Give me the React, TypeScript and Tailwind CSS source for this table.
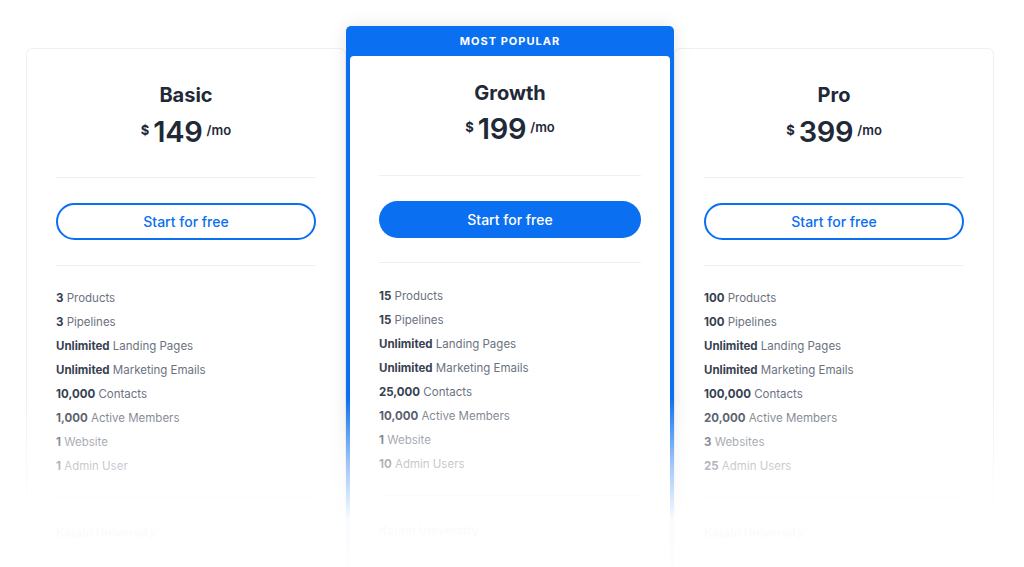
import React from 'react';

type Feature = { strong: string; rest: string };

interface Plan {
  name: string;
  price: string;
  popular?: boolean;
  features: Feature[];
}

const plans: Plan[] = [
  {
    name: 'Basic',
    price: '149',
    features: [
      { strong: '3', rest: 'Products' },
      { strong: '3', rest: 'Pipelines' },
      { strong: 'Unlimited', rest: 'Landing Pages' },
      { strong: 'Unlimited', rest: 'Marketing Emails' },
      { strong: '10,000', rest: 'Contacts' },
      { strong: '1,000', rest: 'Active Members' },
      { strong: '1', rest: 'Website' },
      { strong: '1', rest: 'Admin User' },
    ],
  },
  {
    name: 'Growth',
    price: '199',
    popular: true,
    features: [
      { strong: '15', rest: 'Products' },
      { strong: '15', rest: 'Pipelines' },
      { strong: 'Unlimited', rest: 'Landing Pages' },
      { strong: 'Unlimited', rest: 'Marketing Emails' },
      { strong: '25,000', rest: 'Contacts' },
      { strong: '10,000', rest: 'Active Members' },
      { strong: '1', rest: 'Website' },
      { strong: '10', rest: 'Admin Users' },
    ],
  },
  {
    name: 'Pro',
    price: '399',
    features: [
      { strong: '100', rest: 'Products' },
      { strong: '100', rest: 'Pipelines' },
      { strong: 'Unlimited', rest: 'Landing Pages' },
      { strong: 'Unlimited', rest: 'Marketing Emails' },
      { strong: '100,000', rest: 'Contacts' },
      { strong: '20,000', rest: 'Active Members' },
      { strong: '3', rest: 'Websites' },
      { strong: '25', rest: 'Admin Users' },
    ],
  },
];

function PlanBody({ plan }: { plan: Plan }) {
  const popular = !!plan.popular;
  return (
    <div className={`px-[29px] pb-[40px] ${popular ? 'pt-[23px]' : 'pt-[32px]'}`}>
      {/* Nombre y precio */}
      <h3 className="h-[28px] text-center text-[20px] font-bold leading-[28px] text-[#1f2937]">{plan.name}</h3>
      <div className={`flex h-[36px] items-center justify-center gap-[4px] text-[#1f2937] ${popular ? 'mt-[3px]' : 'mt-[4px]'}`}>
        <span className="text-[13px] font-bold">$</span>
        <span className="text-[29px] font-semibold leading-none tracking-[-0.3px]">{plan.price}</span>
        <span className="text-[13px] font-semibold">/mo</span>
      </div>

      <div className={`h-px bg-[#eef0f2] ${popular ? 'mt-[29px]' : 'mt-[28px]'}`} />

      <button
        className={`mt-[25px] flex h-[37px] w-full items-center justify-center rounded-full text-[14px] font-medium ${
          popular ? 'bg-[#0a6ff0] text-white' : 'border-2 border-[#0a6ff0] text-[#0a6ff0]'
        }`}
      >
        Start for free
      </button>

      <div className={`h-px bg-[#eef0f2] ${popular ? 'mt-[24px]' : 'mt-[25px]'}`} />

      {/* Características */}
      <ul className={popular ? 'mt-[21px]' : 'mt-[20px]'}>
        {plan.features.map((f, i) => (
          <li key={i} className="h-[24px] text-[11.5px] leading-[24px] text-[#6b7280]">
            <span className="font-bold text-[#374151]">{f.strong}</span> {f.rest}
          </li>
        ))}
      </ul>

      <div className="mt-[19px] h-px bg-[#eef0f2]" />
      <p className="mt-[26px] text-[12px] font-bold text-[#374151]">Kajabi University</p>
    </div>
  );
}

export default function App() {
  return (
    <div className="relative h-[567px] w-[1024px] overflow-hidden bg-white font-['Inter','Liberation_Sans',sans-serif]">
      <div className="flex items-start pl-[26px] pt-[26px]">
        <div className="mt-[22px] w-[320px] rounded-[6px] border border-[#eef0f3] bg-white">
          <PlanBody plan={plans[0]} />
        </div>

        <div className="relative z-10 w-[328px] rounded-t-[5px] bg-[#0a6ff0] px-[4px] shadow-[0_0_18px_rgba(15,23,42,0.10)]">
          <div className="flex h-[30px] items-center justify-center text-[11px] font-bold tracking-[1px] text-white">
            MOST POPULAR
          </div>
          <div className="rounded-t-[4px] bg-white">
            <PlanBody plan={plans[1]} />
          </div>
        </div>

        <div className="mt-[22px] w-[320px] rounded-[6px] border border-[#eef0f3] bg-white">
          <PlanBody plan={plans[2]} />
        </div>
      </div>

      {/* Degradado inferior */}
      <div className="pointer-events-none absolute inset-x-0 bottom-0 z-20 h-[170px] bg-[linear-gradient(to_bottom,rgba(255,255,255,0)_0%,rgba(255,255,255,0.62)_40%,rgba(255,255,255,0.975)_72%,rgba(255,255,255,0.99)_100%)]" />
    </div>
  );
}
